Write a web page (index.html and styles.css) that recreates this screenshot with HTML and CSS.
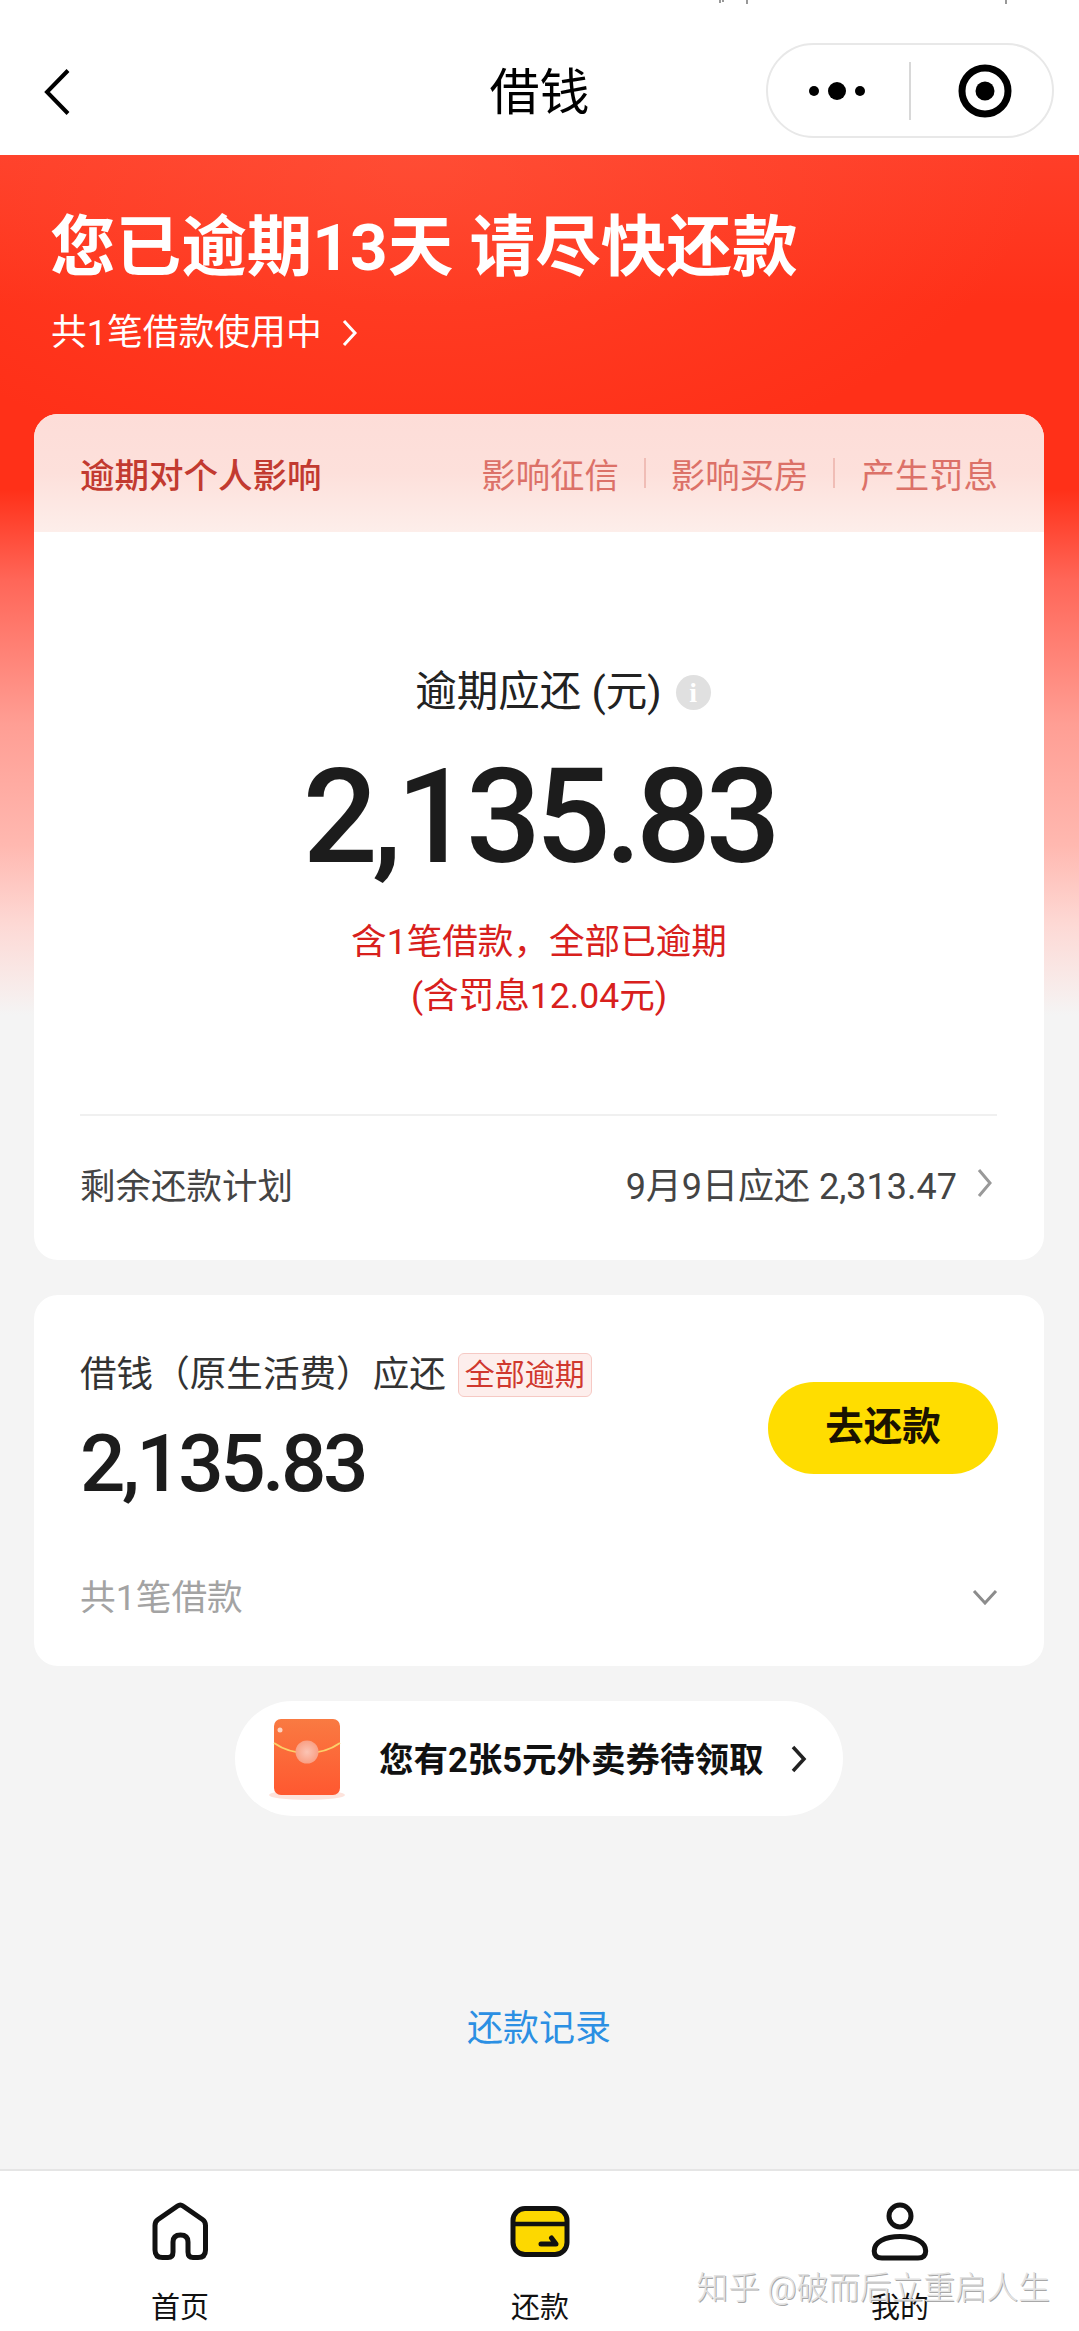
FILE: index.html
```html
<!DOCTYPE html>
<html lang="zh">
<head>
<meta charset="utf-8">
<title>借钱</title>
<link rel="stylesheet" href="styles.css">
</head>
<body>
<div class="app">
  <header class="topbar">
    <svg class="status-marks" viewBox="0 0 300 4" width="300" height="4"><path d="M2 0v3M5 0v2M29 0v4M288 0v4" stroke="#555" stroke-width="1.2" fill="none"/></svg>
    <svg class="back" viewBox="0 0 26 46" width="26" height="46"><path d="M24 1.5 3 23l21 21.5" fill="none" stroke="#000" stroke-width="4"/></svg>
    <div class="page-title">借钱</div>
    <div class="capsule">
      <svg class="cap-dots" viewBox="0 0 60 20" width="60" height="20"><circle cx="6" cy="10" r="5" fill="#000"/><circle cx="29" cy="10" r="9" fill="#000"/><circle cx="52" cy="10" r="5" fill="#000"/></svg>
      <span class="cap-line"></span>
      <svg class="cap-target" viewBox="0 0 54 54" width="54" height="54"><circle cx="27" cy="27" r="23" fill="none" stroke="#000" stroke-width="7"/><circle cx="27" cy="27" r="9.5" fill="#000"/></svg>
    </div>
  </header>

  <main class="main">
    <h1 class="hero-title">您已逾期13天 请尽快还款</h1>
    <div class="hero-sub"><span>共1笔借款使用中</span>
      <svg viewBox="0 0 16 28" width="16" height="28"><path d="M2 2l11 12L2 26" fill="none" stroke="#fff" stroke-width="3"/></svg>
    </div>

    <section class="card card-main">
      <div class="impact">
        <span class="impact-title">逾期对个人影响</span>
        <div class="impact-tags">
          <span>影响征信</span><i></i><span>影响买房</span><i></i><span>产生罚息</span>
        </div>
      </div>
      <div class="due">
        <div class="due-label"><span>逾期应还 (元)</span><b class="info">i</b></div>
        <div class="due-amount">2,135.83</div>
        <div class="due-note">含1笔借款，全部已逾期</div>
        <div class="due-note">(含罚息12.04元)</div>
      </div>
      <div class="plan">
        <span>剩余还款计划</span>
        <span class="plan-right"><span>9月9日应还 2,313.47</span>
          <svg viewBox="0 0 16 30" width="16" height="30"><path d="M2 2l11 13L2 28" fill="none" stroke="#999" stroke-width="3"/></svg>
        </span>
      </div>
    </section>

    <section class="card card-loan">
      <div class="loan-top">
        <div class="loan-info">
          <div class="loan-title"><span class="loan-name">借钱（原生活费）应还</span><em class="badge">全部逾期</em></div>
          <div class="loan-amount">2,135.83</div>
        </div>
        <div class="pay-btn">去还款</div>
      </div>
      <div class="loan-foot">
        <span>共1笔借款</span>
        <svg viewBox="0 0 26 16" width="26" height="16"><path d="M2 2l11 12L24 2" fill="none" stroke="#8c8c8c" stroke-width="3"/></svg>
      </div>
    </section>

    <div class="coupon-wrap">
      <div class="coupon">
        <svg class="envelope" viewBox="0 0 76 86" width="76" height="86">
          <defs>
            <linearGradient id="env" x1="0" y1="0" x2="0" y2="1"><stop offset="0" stop-color="#f97a42"/><stop offset="1" stop-color="#ff5830"/></linearGradient>
            <radialGradient id="seal"><stop offset="0" stop-color="#fbc4b4"/><stop offset="1" stop-color="#f9a085"/></radialGradient>
          </defs>
          <ellipse cx="38" cy="79" rx="38" ry="5" fill="#fde3dc"/>
          <rect x="5" y="3" width="66" height="76" rx="7" fill="url(#env)"/>
          <circle cx="11" cy="14" r="2.5" fill="#fdd3c0"/>
          <path d="M5 27c10 7 21 10 33 10s23-3 33-10" fill="none" stroke="#fbd06a" stroke-width="2"/>
          <circle cx="38" cy="36" r="11.5" fill="url(#seal)"/>
        </svg>
        <span class="coupon-text">您有2张5元外卖券待领取</span>
        <svg viewBox="0 0 18 30" width="18" height="30"><path d="M3 3l11 12L3 27" fill="none" stroke="#222" stroke-width="3.5"/></svg>
      </div>
    </div>

    <a class="records">还款记录</a>
  </main>

  <nav class="tabbar">
    <div class="tab">
      <svg viewBox="0 0 60 62" width="60" height="62"><path d="M27.5 5 8 18.5Q5 20.5 5 24.5V49Q5 56.5 12.5 56.5H18Q23 56.5 23 51V41Q23 34 30.5 34 38 34 38 41V51Q38 56.5 43 56.5H48Q55.5 56.5 55.5 49V24.5Q55.5 20.5 52.5 18.5L33 5Q30.3 3 27.5 5Z" fill="none" stroke="#111" stroke-width="5" stroke-linejoin="round"/></svg>
      <span>首页</span>
    </div>
    <div class="tab">
      <svg viewBox="0 0 60 62" width="60" height="62"><rect x="3" y="7.5" width="54" height="46" rx="12" fill="#fdd800" stroke="#111" stroke-width="5"/><path d="M3 23h54" stroke="#111" stroke-width="4.5"/><path d="M31 43H46L41.5 37" fill="none" stroke="#111" stroke-width="5" stroke-linecap="round" stroke-linejoin="round"/></svg>
      <span>还款</span>
    </div>
    <div class="tab">
      <svg viewBox="0 0 60 62" width="60" height="62"><circle cx="30" cy="15" r="11" fill="none" stroke="#111" stroke-width="5"/><path d="M12 57Q4.2 57 4.2 50C4.2 41 15 35.5 30 35.5S55.7 41 55.7 50Q55.7 57 48 57Z" fill="none" stroke="#111" stroke-width="5" stroke-linejoin="round"/></svg>
      <span>我的</span>
    </div>
  </nav>
  <div class="watermark">知乎 @破而后立重启人生</div>
</div>
</body>
</html>
```
FILE: styles.css
```css
* { box-sizing: border-box; }
html, body { margin: 0; padding: 0; }
body {
  font-family: Roboto, "Noto Sans CJK SC", "Noto Sans", sans-serif;
  background: #f4f4f4;
  color: #222;
}
.app {
  position: relative;
  width: 1079px;
  height: 2331px;
  display: flex;
  flex-direction: column;
  overflow: hidden;
}
.topbar {
  height: 155px;
  flex: none;
  background: #fff;
  position: relative;
  display: flex;
  align-items: center;
  justify-content: space-between;
  padding: 0 25px 0 44px;
}
.status-marks { position: absolute; left: 718px; top: 0; }
.back { margin-top: 28px; }
.page-title {
  position: absolute;
  left: 0;
  right: 0;
  top: 61px;
  line-height: 64px;
  text-align: center;
  font-size: 50px;
  color: #000;
}
.capsule {
  width: 288px;
  height: 95px;
  margin-top: 26px;
  border: 2px solid #e8e8e8;
  border-radius: 48px;
  display: flex;
  align-items: center;
  padding-left: 40px;
}
.cap-dots { flex: none; }
.cap-line { width: 2px; height: 58px; background: #d8d8d8; margin-left: 41px; }
.cap-target { margin-left: 47px; }

.main {
  flex: 1;
  padding: 0 35px 0 34px;
  background:
    radial-gradient(ellipse 620px 330px at 420px 0, rgba(255,110,80,.3), rgba(255,110,80,0) 100%),
    linear-gradient(180deg, #ff3e28 0, #ff3018 150px, #ff3018 334px, #ff6658 425px, #ff9e94 569px, #ffb8b0 690px, #fdd9d5 770px, #f7eeed 840px, #f4f4f4 860px);
  background-repeat: no-repeat;
  background-size: 100% 900px, 100% 900px;
}
.hero-title {
  margin: 0;
  padding: 49px 0 0 16px;
  font-size: 65.6px;
  line-height: 88px;
  font-weight: 700;
  color: #fff;
  white-space: nowrap;
}
.hero-sub {
  margin-top: 17px;
  padding-left: 17px;
  display: flex;
  align-items: center;
  gap: 20px;
  font-size: 35.8px;
  line-height: 48px;
  color: #fff;
}
.card {
  background: #fff;
  border-radius: 24px;
  overflow: hidden;
}
.card-main { margin-top: 57px; height: 846px; }
.impact {
  height: 118px;
  padding: 0 46px 0 46px;
  display: flex;
  align-items: center;
  justify-content: space-between;
  background: linear-gradient(180deg, #fdddd8 0, #fde0db 50%, #fdeeea 100%);
}
.impact-title { font-size: 34.5px; font-weight: 500; color: #c23a30; }
.impact-tags { display: flex; align-items: center; font-size: 34.4px; color: #dc7168; }
.impact-tags i { width: 2px; height: 30px; background: #f0bdb6; margin: 0 25px; }
.due { height: 582px; text-align: center; padding-top: 134px; }
.due-label {
  display: flex;
  justify-content: center;
  align-items: center;
  gap: 14px;
  font-size: 41.5px;
  line-height: 52px;
  color: #222;
  padding-left: 48px;
}
.info {
  width: 35px;
  height: 35px;
  border-radius: 50%;
  background: #e0e0e0;
  color: #fff;
  font-family: "Liberation Serif", serif;
  font-size: 28px;
  line-height: 35px;
  font-weight: 700;
}
.due-amount {
  margin-top: 34px;
  font-size: 132px;
  line-height: 130px;
  font-weight: 500;
  letter-spacing: -5.5px;
  color: #1c1c1c;
}
.due-note {
  font-size: 35.6px;
  line-height: 53.5px;
  color: #d8201c;
}
.due-amount + .due-note { margin-top: 34px; }
.plan {
  height: 146px;
  margin: 0 47px 0 46px;
  padding-bottom: 10px;
  border-top: 2px solid #f0f0f0;
  display: flex;
  align-items: center;
  justify-content: space-between;
  font-size: 35.5px;
  color: #444;
}
.plan-right { display: flex; align-items: center; gap: 20px; padding-right: 4px; font-size: 36px; }
.card-loan { margin-top: 35px; height: 371px; padding: 0 46px 0 46px; }
.loan-top { height: 250px; display: flex; justify-content: space-between; align-items: flex-start; }
.loan-title { display: flex; align-items: center; gap: 12px; margin-top: 58px; height: 44px; font-size: 36.6px; color: #333; }
.loan-name { padding-bottom: 7px; }
.badge {
  font-style: normal;
  font-size: 30px;
  line-height: 42px;
  padding: 0 6px;
  height: 44px;
  color: #d0382e;
  background: #fdeeec;
  border: 1px solid #f6c9c4;
  border-radius: 6px;
}
.loan-amount {
  margin-top: 23px;
  font-size: 80px;
  line-height: 88px;
  font-weight: 500;
  letter-spacing: -3.5px;
  color: #1c1c1c;
}
.pay-btn {
  width: 230px;
  height: 92px;
  margin-top: 87px;
  border-radius: 46px;
  background: #ffdd00;
  text-align: center;
  line-height: 90px;
  font-size: 38.5px;
  font-weight: 700;
  color: #1a1200;
}
.loan-foot {
  height: 104px;
  padding-bottom: 6px;
  display: flex;
  align-items: center;
  justify-content: space-between;
  font-size: 35.7px;
  color: #a3a3a3;
}
.loan-foot svg { margin-top: 6px; }
.coupon-wrap { display: flex; justify-content: center; margin-top: 35px; }
.coupon {
  width: 608px;
  height: 115px;
  border-radius: 58px;
  background: #fff;
  display: flex;
  align-items: center;
  padding-left: 34px;
}
.coupon-text { margin-left: 34px; margin-right: 26px; padding-bottom: 3px; font-size: 34.5px; font-weight: 700; color: #111; white-space: nowrap; }
.records {
  display: block;
  margin-top: 188px;
  text-align: center;
  font-size: 36px;
  line-height: 50px;
  color: #2b8fe3;
}
.tabbar {
  height: 162px;
  flex: none;
  background: #fff;
  border-top: 2px solid #e5e5e5;
  display: grid;
  grid-template-columns: repeat(3, 360px);
}
.tab {
  display: flex;
  flex-direction: column;
  align-items: center;
  padding-top: 30px;
  font-size: 29px;
  line-height: 40px;
  color: #111;
}
.tab span { margin-top: 25px; }
.watermark {
  position: absolute;
  right: 29px;
  top: 2266px;
  font-size: 31.7px;
  line-height: 46px;
  font-weight: 300;
  color: #e2e2e2;
  text-shadow: 1px 1px 0 #a8a8a8;
  white-space: nowrap;
}
```
